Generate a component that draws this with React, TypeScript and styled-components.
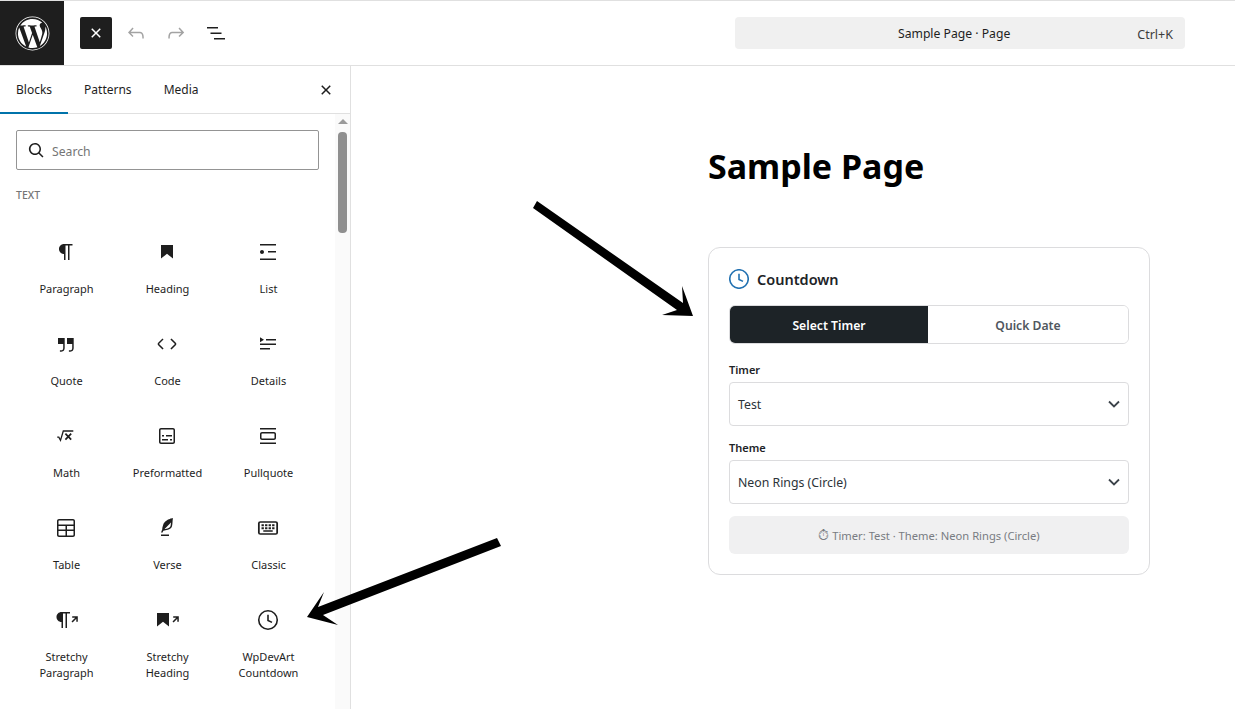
import React from "react";
import styled, { createGlobalStyle } from "styled-components";
import { FaWordpress } from "react-icons/fa";

const GlobalStyle = createGlobalStyle`
    html, body {
        margin: 0;
        padding: 0;
        background: #fff;
    }

    body {
        font-family: "Noto Sans", "Open Sans", "Liberation Sans", sans-serif;
        color: #1e1e1e;
    }

    * {
        box-sizing: border-box;
    }
`;

const PARAGRAPH = "m9.99609 14v-.2251l.00391.0001v6.225h1.5v-14.5h2.5v14.5h1.5v-14.5h3v-1.5h-8.50391c-2.76142 0-5 2.23858-5 5 0 2.7614 2.23858 5 5 5z";
const BOOKMARK = "M6 5V18.5911L12 13.8473L18 18.5911V5H6Z";

const Clock = () => (
    <>
        <circle cx="12" cy="12" r="9.25" fill="none" stroke="currentColor" strokeWidth="1.6" />
        <path d="M12 6.8V12.4L16 14.4" fill="none" stroke="currentColor" strokeWidth="1.6" />
    </>
);

const StretchArrow = () => (
    <path d="M17.2 8.2h5.6v5.6h-1.5v-3l-3.7 3.7-1.1-1.1 3.7-3.7h-3z" transform="translate(1 0)" />
);

interface BlockItem {
    label: string
    icon: React.ReactNode
}

const BLOCKS: BlockItem[] = [
    { label: "Paragraph", icon: <path d={PARAGRAPH} /> },
    { label: "Heading", icon: <path d={BOOKMARK} /> },
    { label: "List", icon: <path d="M4 4v1.5h16V4H4zm8 8.5h8V11h-8v1.5zM4 20h16v-1.5H4V20zm4-8c0-1.1-.9-2-2-2s-2 .9-2 2 .9 2 2 2 2-.9 2-2z" /> },
    { label: "Quote", icon: <path d="M13 6v6h5.2v4c0 .8-.2 1.4-.5 1.7-.6.6-1.6.6-2.5.5h-.3v1.5h.5c1 0 2.3-.1 3.3-1 .6-.6 1-1.6 1-2.8V6H13zm-9 6h5.2v4c0 .8-.2 1.4-.5 1.7-.6.6-1.6.6-2.5.5h-.3v1.5h.5c1 0 2.3-.1 3.3-1 .6-.6 1-1.6 1-2.8V6H4v6z" /> },
    { label: "Code", icon: <path d="M20.8 10.7l-4.3-4.3-1.1 1.1 4.3 4.3c.1.1.1.3 0 .4l-4.3 4.3 1.1 1.1 4.3-4.3c.7-.8.7-1.9 0-2.6zM4.2 11.8l4.3-4.3-1-1-4.3 4.3c-.7.7-.7 1.8 0 2.5l4.3 4.3 1.1-1.1-4.3-4.3c-.2-.1-.2-.3-.1-.4z" /> },
    { label: "Details", icon: <path d="M4 16h10v1.5H4V16Zm0-4.5h16V13H4v-1.5ZM10 7h10v1.5H10V7ZM4 5.25l4 2.5-4 2.5v-5Z" /> },
    {
        label: "Math",
        icon: (
            <>
                <path d="M3.2 13.2h1.6l1.7 3.2 2.8-9.4h10" fill="none" stroke="currentColor" strokeWidth="1.3" />
                <path d="M11.4 9.6l5.8 6M17.2 9.6l-5.8 6" fill="none" stroke="currentColor" strokeWidth="1.7" />
            </>
        ),
    },
    { label: "Preformatted", icon: <path d="M18 4H6c-1.1 0-2 .9-2 2v12c0 1.1.9 2 2 2h12c1.1 0 2-.9 2-2V6c0-1.1-.9-2-2-2zm.5 14c0 .3-.2.5-.5.5H6c-.3 0-.5-.2-.5-.5V6c0-.3.2-.5.5-.5h12c.3 0 .5.2.5.5v12zM7 16.5h6V15H7v1.5zm4-4h6V11h-6v1.5zM9 11H7v1.5h2V11zm6 5.5h2V15h-2v1.5z" /> },
    { label: "Pullquote", icon: <path d="M18 8H6c-1.1 0-2 .9-2 2v4c0 1.1.9 2 2 2h12c1.1 0 2-.9 2-2v-4c0-1.1-.9-2-2-2zm.5 6c0 .3-.2.5-.5.5H6c-.3 0-.5-.2-.5-.5v-4c0-.3.2-.5.5-.5h12c.3 0 .5.2.5.5v4zM4 4v1.5h16V4H4zm0 16h16v-1.5H4V20z" /> },
    { label: "Table", icon: <path d="M19 3H5c-1.1 0-2 .9-2 2v14c0 1.1.9 2 2 2h14c1.1 0 2-.9 2-2V5c0-1.1-.9-2-2-2zM5 4.5h14c.3 0 .5.2.5.5v3.5h-15V5c0-.3.2-.5.5-.5zm8 5.5h6.5v3.5H13V10zm-1.5 3.5h-7V10h7v3.5zm-7 5.5v-4h7v4.5H5c-.3 0-.5-.2-.5-.5zm14.5.5h-6V15h6.5v4c0 .3-.2.5-.5.5z" /> },
    { label: "Verse", icon: <path d="M17.8 2l-.9.3c-.1 0-3.6 1-5.2 2.1C10 5.5 9.3 6.5 8.9 7.1c-.6.9-1.7 4.7-1.7 6.3l-.9 2.3c-.2.4 0 .8.4 1 .1 0 .2.1.3.1.3 0 .6-.2.7-.5l.6-1.5c.3 0 .7-.1 1.2-.2.7-.1 1.4-.3 2.2-.5.8-.2 1.6-.5 2.4-.8.7-.3 1.4-.7 1.9-1.2s.8-1.2 1-1.9c.2-.7.3-1.6.4-2.4.1-.8.1-1.7.2-2.5 0-.8.1-1.5.2-2.1V2zm-1.9 5.6c-.1.8-.2 1.5-.3 2.1-.2.6-.4 1-.6 1.3-.3.3-.8.6-1.4.9-.7.3-1.4.5-2.2.8-.6.2-1.3.3-1.8.4L15 7.5c.3-.3.6-.7 1-1.1 0 .4 0 .8-.1 1.2zM6 20h8v-1.5H6V20z" /> },
    { label: "Classic", icon: <path d="M16 15.5H8V14h8zM8.5 13h-2v-2h2zm3 0h-2v-2h2zm3 0h-2v-2h2zm3 0h-2v-2h2zm-9-3h-2V8h2zm3 0h-2V8h2zm3 0h-2V8h2zm3 0h-2V8h2zM18.5 6.5h-13a.5.5 0 0 0-.5.5v9.5a.5.5 0 0 0 .5.5h13a.5.5 0 0 0 .5-.5V7a.5.5 0 0 0-.5-.5zM5.5 5h13a2 2 0 0 1 2 2v9.5a2 2 0 0 1-2 2h-13a2 2 0 0 1-2-2V7a2 2 0 0 1 2-2z" transform="translate(12 .2) scale(1.18 1) translate(-12 0)" /> },
    {
        label: "Stretchy Paragraph",
        icon: (
            <>
                <path d={PARAGRAPH} transform="translate(-2.5 0)" />
                <StretchArrow />
            </>
        ),
    },
    {
        label: "Stretchy Heading",
        icon: (
            <>
                <path d={BOOKMARK} transform="translate(-4 0)" />
                <StretchArrow />
            </>
        ),
    },
    { label: "WpDevArt Countdown", icon: <Clock /> },
];

const Chevron = () => (
    <ChevronIcon viewBox="0 0 12 8">
        <path d="M1 1.5l5 5 5-5" />
    </ChevronIcon>
);

const App: React.FC = () => {
    return (
        <Page>
            <GlobalStyle />
            <TopBar>
                <LogoBox>
                    <FaWordpress size={35} />
                </LogoBox>
                <Tools>
                    <ToolButton $active>
                        <Icon viewBox="0 0 24 24"><path d="M12 13.06l3.712 3.713 1.061-1.06L13.061 12l3.712-3.712-1.06-1.06L12 10.938 8.288 7.227l-1.061 1.06L10.939 12l-3.712 3.712 1.06 1.061L12 13.061z" /></Icon>
                    </ToolButton>
                    <ToolButton $muted>
                        <Icon viewBox="0 0 24 24"><path d="M18.3 11.7c-.6-.6-1.4-.9-2.3-.9H6.7l2.9-3.3-1.1-1-4.5 5L8.5 16l1-1-2.7-2.7H16c.5 0 .9.2 1.3.5 1 1 1 3.4 1 4.5v.3h1.5v-.2c0-1.5 0-4.3-1.5-5.7z" /></Icon>
                    </ToolButton>
                    <ToolButton $muted>
                        <Icon viewBox="0 0 24 24"><path d="M15.6 6.5l-1.1 1 2.9 3.3H8c-.9 0-1.7.3-2.3.9-1.4 1.5-1.4 4.2-1.4 5.6v.2h1.5v-.3c0-1.1 0-3.5 1-4.5.3-.3.7-.5 1.3-.5h9.2L14.5 15l1.1 1.1 4.6-4.6-4.6-5z" /></Icon>
                    </ToolButton>
                    <ToolButton>
                        <Icon viewBox="0 0 24 24"><path d="M3 6h11v1.5H3V6Zm3.5 5.5h11V13h-11v-1.5ZM21 17H10v1.5h11V17Z" /></Icon>
                    </ToolButton>
                </Tools>
                <CommandBar>
                    <CommandTitle>Sample Page · Page</CommandTitle>
                    <Shortcut>Ctrl+K</Shortcut>
                </CommandBar>
            </TopBar>

            <Body>
                <Sidebar>
                    <TabRow>
                        <SideTab $active>Blocks</SideTab>
                        <SideTab>Patterns</SideTab>
                        <SideTab>Media</SideTab>
                        <CloseButton>
                            <Icon viewBox="0 0 24 24"><path d="M12 13.06l3.712 3.713 1.061-1.06L13.061 12l3.712-3.712-1.06-1.06L12 10.938 8.288 7.227l-1.061 1.06L10.939 12l-3.712 3.712 1.06 1.061L12 13.061z" /></Icon>
                        </CloseButton>
                    </TabRow>
                    <SideBody>
                        <Inserter>
                            <SearchBox>
                                <SearchIcon viewBox="0 0 24 24"><path d="M13 5c-3.3 0-6 2.7-6 6 0 1.4.5 2.7 1.3 3.7l-3.8 3.8 1.1 1.1 3.8-3.8c1 .8 2.3 1.3 3.7 1.3 3.3 0 6-2.7 6-6S16.3 5 13 5zm0 10.5c-2.5 0-4.5-2-4.5-4.5s2-4.5 4.5-4.5 4.5 2 4.5 4.5-2 4.5-4.5 4.5z" /></SearchIcon>
                                <Placeholder>Search</Placeholder>
                            </SearchBox>
                            <SectionTitle>Text</SectionTitle>
                            <BlockGrid>
                                {BLOCKS.map((block) => (
                                    <BlockCell key={block.label}>
                                        <BlockIcon viewBox="0 0 24 24">{block.icon}</BlockIcon>
                                        <BlockLabel>{block.label}</BlockLabel>
                                    </BlockCell>
                                ))}
                            </BlockGrid>
                        </Inserter>
                        <ScrollTrack>
                            <ScrollArrow />
                            <ScrollThumb />
                        </ScrollTrack>
                    </SideBody>
                </Sidebar>

                <Canvas>
                    <PageTitle>Sample Page</PageTitle>
                    <Card>
                        <CardHeader>
                            <CardClock viewBox="2 2 20 20"><Clock /></CardClock>
                            <CardTitle>Countdown</CardTitle>
                        </CardHeader>
                        <Segments>
                            <Segment $active>Select Timer</Segment>
                            <Segment>Quick Date</Segment>
                        </Segments>
                        <FieldLabel>Timer</FieldLabel>
                        <SelectBox>
                            Test
                            <Chevron />
                        </SelectBox>
                        <FieldLabel>Theme</FieldLabel>
                        <SelectBox>
                            Neon Rings (Circle)
                            <Chevron />
                        </SelectBox>
                        <Summary>
                            <span><TimerGlyph>⏱</TimerGlyph> Timer: Test · Theme: Neon Rings (Circle)</span>
                        </Summary>
                    </Card>
                </Canvas>
            </Body>

            <ArrowLayer viewBox="0 0 1235 709">
                <polygon points="537,201 683,303 682,286 693,316 662,315 677,310 533,208" />
                <polygon points="497,538 318,607 324,592 307,617 338,625 323,615 501,546" />
            </ArrowLayer>
        </Page>
    );
}


const Page = styled.div`
    position: relative;
    display: flex;
    flex-direction: column;
    width: 1235px;
    height: 709px;
    overflow: hidden;
    background: #fff;
`;

const TopBar = styled.header`
    display: flex;
    align-items: center;
    flex: 0 0 66px;
    border-top: 1px solid #e0e0e0;
    border-bottom: 1px solid #e0e0e0;
`;

const LogoBox = styled.div`
    display: flex;
    align-items: center;
    justify-content: center;
    width: 64px;
    height: 64px;
    color: #fff;
    background: #1e1e1e;
`;

const Tools = styled.div`
    display: flex;
    gap: 8px;
    margin-left: 16px;
`;

const ToolButton = styled.div<{ $active?: boolean; $muted?: boolean }>`
    display: flex;
    align-items: center;
    justify-content: center;
    width: 32px;
    height: 32px;
    border-radius: 2px;
    color: ${props => props.$active ? "#fff" : props.$muted ? "#a3a3a3" : "#1e1e1e"};
    background: ${props => props.$active ? "#1e1e1e" : "transparent"};
`;

const Icon = styled.svg`
    flex: none;
    width: 24px;
    height: 24px;
    fill: currentColor;
`;

const CommandBar = styled.div`
    display: flex;
    align-items: center;
    width: 450px;
    height: 32px;
    margin-left: 503px;
    padding: 0 12px 0 36px;
    border-radius: 4px;
    background: #f0f0f0;
`;

const CommandTitle = styled.span`
    flex: 1;
    font-size: 12.2px;
    text-align: center;
`;

const Shortcut = styled.span`
    padding-top: 2px;
    font-size: 12.5px;
    color: #3c3c3c;
`;

const Body = styled.div`
    display: flex;
    flex: 1;
    min-height: 0;
`;

const Sidebar = styled.aside`
    display: flex;
    flex-direction: column;
    flex: 0 0 351px;
    border-right: 1px solid #e0e0e0;
`;

const TabRow = styled.div`
    display: flex;
    align-items: center;
    flex: 0 0 48px;
    border-bottom: 1px solid #e0e0e0;
`;

const SideTab = styled.div<{ $active?: boolean }>`
    display: flex;
    align-items: center;
    height: 48px;
    padding: 1px 16px 0;
    margin-bottom: -1px;
    font-size: 12px;
    color: #1e1e1e;
    border-bottom: 2px solid ${props => props.$active ? "#0073aa" : "transparent"};
`;

const CloseButton = styled.div`
    display: flex;
    margin-left: auto;
    margin-right: 12px;
`;

const SideBody = styled.div`
    display: flex;
    flex: 1;
    min-height: 0;
`;

const Inserter = styled.div`
    flex: 0 0 335px;
    padding: 16px 16px 0;
`;

const SearchBox = styled.div`
    display: flex;
    align-items: center;
    width: 303px;
    height: 40px;
    padding-left: 7px;
    border: 1px solid #949494;
    border-radius: 2px;
`;

const SearchIcon = styled(Icon)`
    transform: scaleX(-1);
`;

const Placeholder = styled.span`
    margin-left: 4px;
    padding-top: 2px;
    font-size: 12.2px;
    color: #757575;
`;

const SectionTitle = styled.h2`
    margin: 17px 0 0;
    font-size: 10.5px;
    font-weight: 500;
    line-height: 16px;
    text-transform: uppercase;
    color: #757575;
`;

const BlockGrid = styled.div`
    display: grid;
    grid-template-columns: repeat(3, 101px);
    grid-auto-rows: 92px;
    margin-top: 25px;
`;

const BlockCell = styled.div`
    display: flex;
    flex-direction: column;
    align-items: center;
    padding-top: 12px;
`;

const BlockIcon = styled(Icon)`
    margin-right: 1.5px;
`;

const BlockLabel = styled.span`
    width: 80px;
    margin-top: 17px;
    font-size: 11px;
    line-height: 16px;
    text-align: center;
    color: #1e1e1e;
`;

const ScrollTrack = styled.div`
    display: flex;
    flex-direction: column;
    align-items: center;
    flex: 0 0 15px;
    padding-top: 5px;
    background: #fafafa;
`;

const ScrollArrow = styled.div`
    width: 0;
    height: 0;
    border-left: 5px solid transparent;
    border-right: 5px solid transparent;
    border-bottom: 5px solid #9a9a9a;
`;

const ScrollThumb = styled.div`
    width: 9px;
    height: 101px;
    margin-top: 8px;
    border-radius: 4px;
    background: #8f8f8f;
`;

const Canvas = styled.main`
    flex: 1;
    padding: 78px 0 0 357px;
`;

const PageTitle = styled.h1`
    margin: 0 0 59px;
    font-size: 34px;
    font-weight: 700;
    line-height: 44px;
    color: #000;
`;

const Card = styled.section`
    width: 442px;
    padding: 20px;
    border: 1px solid #dcdcde;
    border-radius: 12px;
`;

const CardHeader = styled.div`
    display: flex;
    align-items: center;
    gap: 8px;
    height: 22px;
    margin-bottom: 15px;
`;

const CardClock = styled.svg`
    width: 20px;
    height: 20px;
    color: #2271b1;
`;

const CardTitle = styled.h3`
    margin: 0;
    font-size: 14.5px;
    font-weight: 600;
    color: #1d2327;
`;

const Segments = styled.div`
    display: grid;
    grid-template-columns: 198px 1fr;
    height: 39px;
    margin-bottom: 18px;
    border: 1px solid #dcdcde;
    border-radius: 6px;
    overflow: hidden;
`;

const Segment = styled.div<{ $active?: boolean }>`
    display: flex;
    align-items: center;
    justify-content: center;
    padding-top: 1px;
    font-size: 12.2px;
    font-weight: 600;
    color: ${props => props.$active ? "#fff" : "#50575e"};
    background: ${props => props.$active ? "#1d2327" : "#fff"};
`;

const FieldLabel = styled.label`
    display: block;
    margin-bottom: 4px;
    font-size: 11px;
    font-weight: 600;
    line-height: 16px;
    color: #1d2327;
`;

const SelectBox = styled.div`
    display: flex;
    align-items: center;
    justify-content: space-between;
    height: 44px;
    margin-bottom: 14px;
    padding: 0 8px;
    font-size: 12.3px;
    color: #2c3338;
    border: 1px solid #dcdcde;
    border-radius: 4px;
`;

const ChevronIcon = styled.svg`
    width: 12px;
    height: 8px;
    fill: none;
    stroke: #3c434a;
    stroke-width: 1.8;
`;

const Summary = styled.div`
    display: flex;
    align-items: center;
    justify-content: center;
    height: 38px;
    margin-top: -2px;
    font-size: 11.2px;
    color: #787c82;
    border-radius: 6px;
    background: #f0f0f1;
`;

const TimerGlyph = styled.span`
    font-size: 13.5px;
    line-height: 1;
`;

const ArrowLayer = styled.svg`
    position: absolute;
    top: 0;
    left: 0;
    width: 1235px;
    height: 709px;
    pointer-events: none;
    fill: #000;
`;

export default App;
